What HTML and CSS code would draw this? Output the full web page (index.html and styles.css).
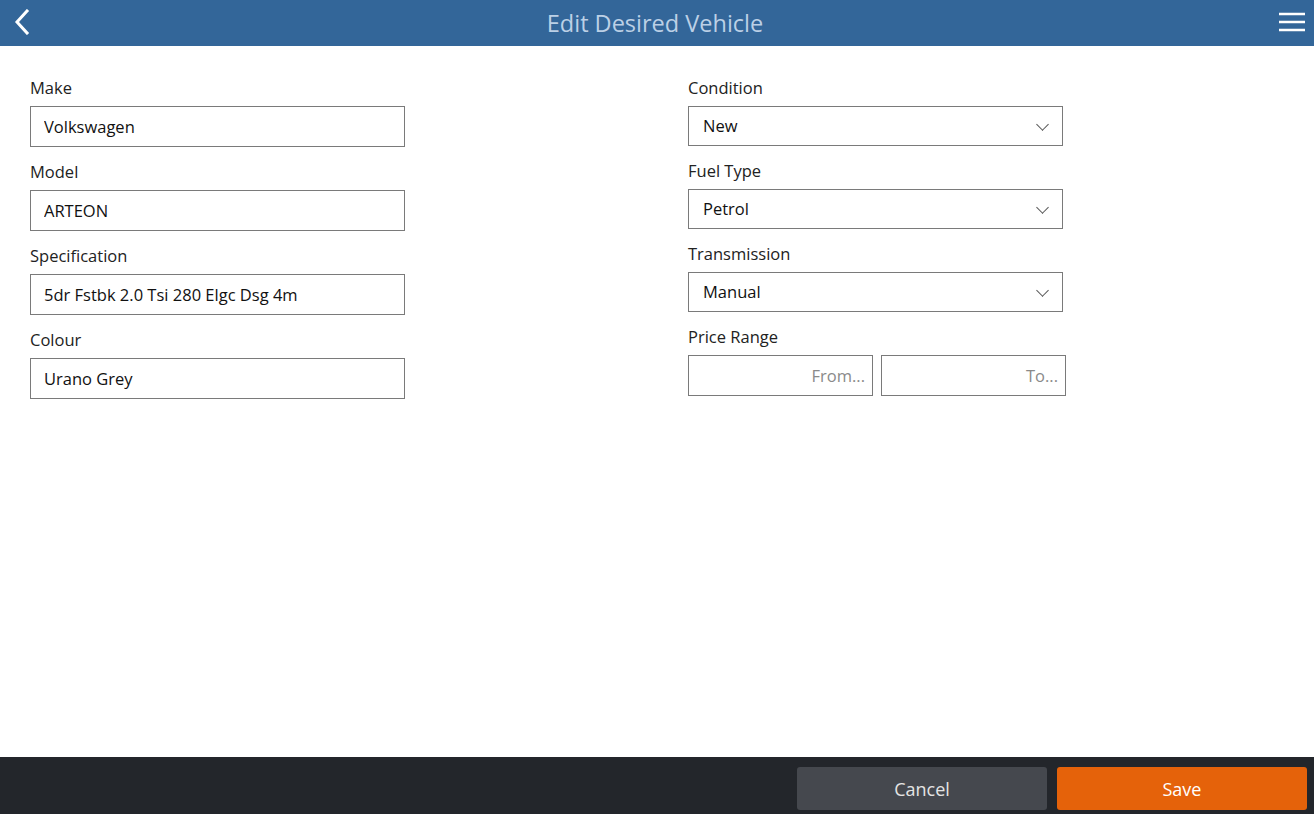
FILE: index.html
```html
<!DOCTYPE html>
<html lang="en">
<head>
    <meta charset="UTF-8">
    <meta name="viewport" content="width=device-width, initial-scale=1.0">
    <title>Edit Desired Vehicle</title>
    <link rel="stylesheet" href="styles.css">
</head>
<body>
    <div class="app">
        <header class="top-bar">
            <button class="icon-btn back-btn" aria-label="Back">
                <svg width="20" height="26" viewBox="0 0 20 26"><path d="M15 2 L5 13 L15 24" fill="none" stroke="#fff" stroke-width="3" stroke-linecap="square"/></svg>
            </button>
            <h1 class="title">Edit Desired Vehicle</h1>
            <button class="icon-btn menu-btn" aria-label="Menu">
                <svg width="28" height="22" viewBox="0 0 28 22"><path d="M1 3 H27 M1 11 H27 M1 19 H27" stroke="#fff" stroke-width="2.5"/></svg>
            </button>
        </header>

        <main class="form">
            <div class="column">
                <div class="field">
                    <label>Make</label>
                    <input class="text-input" type="text" value="Volkswagen">
                </div>
                <div class="field">
                    <label>Model</label>
                    <input class="text-input" type="text" value="ARTEON">
                </div>
                <div class="field">
                    <label>Specification</label>
                    <input class="text-input" type="text" value="5dr Fstbk 2.0 Tsi 280 Elgc Dsg 4m">
                </div>
                <div class="field">
                    <label>Colour</label>
                    <input class="text-input" type="text" value="Urano Grey">
                </div>
            </div>
            <div class="column">
                <div class="field field-select">
                    <label>Condition</label>
                    <div class="select">New<span class="chevron"></span></div>
                </div>
                <div class="field field-select">
                    <label>Fuel Type</label>
                    <div class="select">Petrol<span class="chevron"></span></div>
                </div>
                <div class="field field-select">
                    <label>Transmission</label>
                    <div class="select">Manual<span class="chevron"></span></div>
                </div>
                <div class="field">
                    <label>Price Range</label>
                    <div class="range">
                        <input class="text-input range-input" type="text" placeholder="From...">
                        <input class="text-input range-input" type="text" placeholder="To...">
                    </div>
                </div>
            </div>
        </main>

        <footer class="bottom-bar">
            <button class="btn btn-cancel">Cancel</button>
            <button class="btn btn-save">Save</button>
        </footer>
    </div>
</body>
</html>
```

FILE: styles.css
```css
* {
    box-sizing: border-box;
}
body {
    margin: 0;
    font-family: 'Open Sans', 'Noto Sans', sans-serif;
    color: #222;
    background-color: #fff;
}
.app {
    display: flex;
    flex-direction: column;
    height: 814px;
}
.top-bar {
    height: 46px;
    background-color: #336699;
    display: flex;
    align-items: center;
    justify-content: space-between;
    padding: 0 8px 0 12px;
}
.title {
    margin: 0;
    font-size: 23.5px;
    font-weight: 400;
    color: #bcd0e6;
}
.icon-btn {
    background: none;
    border: none;
    padding: 0;
    display: flex;
    cursor: pointer;
}
.back-btn {
    margin-top: -2px;
}
.menu-btn {
    margin-top: -2px;
}
.form {
    flex: 1;
    display: grid;
    grid-template-columns: 658px 1fr;
    padding-top: 31px;
}
.column {
    padding-left: 30px;
}
.field {
    margin-bottom: 14px;
}
.field label {
    display: block;
    font-size: 16.5px;
    line-height: 22px;
    margin-bottom: 7px;
    color: #222;
}
.field-select label {
    margin-bottom: 7px;
}
.text-input {
    display: block;
    width: 375px;
    height: 41px;
    border: 1px solid #7a7a7a;
    padding: 0 13px;
    font-family: inherit;
    font-size: 16.5px;
    color: #111;
    outline: none;
}
.text-input::placeholder {
    color: #8a8a8a;
}
.select {
    position: relative;
    width: 375px;
    height: 40px;
    border: 1px solid #7a7a7a;
    padding: 0 14px;
    font-size: 16.5px;
    line-height: 38px;
    color: #111;
}
.chevron {
    position: absolute;
    right: 15px;
    top: 13px;
    width: 9px;
    height: 9px;
    border-right: 1px solid #555;
    border-bottom: 1px solid #555;
    transform: rotate(45deg);
}
.range {
    display: flex;
    gap: 8px;
}
.range-input {
    width: 185px;
    text-align: right;
    padding-right: 7px;
}
.bottom-bar {
    height: 57px;
    background-color: #23262b;
    display: flex;
    justify-content: flex-end;
    gap: 10px;
    padding: 10px 7px 4px;
}
.btn {
    width: 250px;
    border: none;
    border-radius: 3px;
    font-family: inherit;
    font-size: 18px;
    color: #fff;
    cursor: pointer;
}
.btn-cancel {
    background-color: #45484e;
    color: #e4e4e4;
}
.btn-save {
    background-color: #e5620a;
}
```
